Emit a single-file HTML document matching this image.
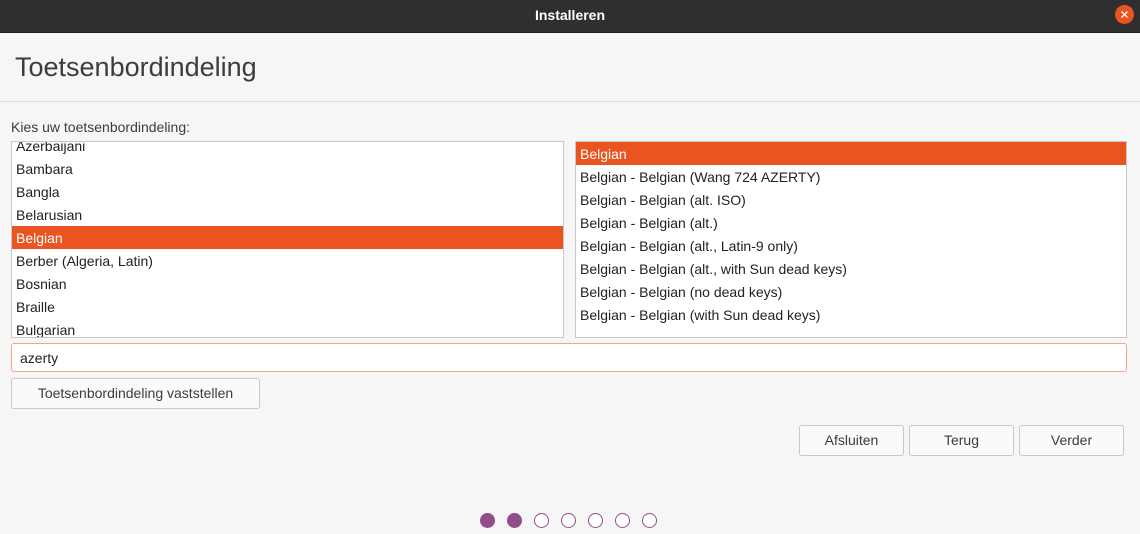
<!DOCTYPE html>
<html><head><style>
*{margin:0;padding:0;box-sizing:border-box}
body{width:1140px;height:534px;background:#f6f6f6;font-family:"Liberation Sans",sans-serif;color:#3c3c3c;position:relative;overflow:hidden}
.tb{position:absolute;left:0;top:0;width:1140px;height:33px;background:#302e2e;border-bottom:1px solid #1e1e1e}
.tb span{position:absolute;left:0;width:1140px;text-align:center;top:7px;color:#fff;font-weight:bold;font-size:14px}
.close{position:absolute;left:1115px;top:5px;width:19px;height:19px;border-radius:50%;background:#e95420}
h1{position:absolute;left:15px;top:52px;font-size:27px;font-weight:normal;color:#3c3c3c}
.sep{position:absolute;left:0;top:101px;width:1140px;height:1px;background:#dcdcdc}
.lbl{position:absolute;left:11px;top:119px;font-size:14px}
.list{position:absolute;top:141px;height:197px;background:#fff;border:1px solid #c8c8c8;overflow:hidden;font-size:14px;color:#222}
.list div{height:23px;line-height:25px;padding-left:4px;white-space:nowrap}
.list .sel{background:#e95420;color:#fff}
.entry{position:absolute;left:11px;top:343px;width:1116px;height:29px;background:#fff;border:1px solid #f2a58a;border-radius:3px;font-size:14px;color:#222;padding-left:8px;line-height:28px}
.btn{position:absolute;height:31px;border:1px solid #cdc7c2;border-radius:3px;background:#fafafa;font-size:14px;text-align:center;line-height:29px;color:#3c3c3c}
.dot{position:absolute;top:513px;width:15px;height:15px;border-radius:50%;border:1.5px solid #924d8b;background:#fff}
.dot.f{background:#924d8b}
</style></head><body>
<div class="tb"><span>Installeren</span><div class="close"><svg width="19" height="19"><path d="M6.5 6.5L12.5 12.5M12.5 6.5L6.5 12.5" stroke="#fff" stroke-width="1.3"/></svg></div></div>
<h1>Toetsenbordindeling</h1>
<div class="sep"></div>
<div class="lbl">Kies uw toetsenbordindeling:</div>
<div class="list" style="left:11px;width:553px"><div style="margin-top:-8px">Azerbaijani</div><div>Bambara</div><div>Bangla</div><div>Belarusian</div><div class="sel">Belgian</div><div>Berber (Algeria, Latin)</div><div>Bosnian</div><div>Braille</div><div>Bulgarian</div></div>
<div class="list" style="left:575px;width:552px"><div class="sel">Belgian</div><div>Belgian - Belgian (Wang 724 AZERTY)</div><div>Belgian - Belgian (alt. ISO)</div><div>Belgian - Belgian (alt.)</div><div>Belgian - Belgian (alt., Latin-9 only)</div><div>Belgian - Belgian (alt., with Sun dead keys)</div><div>Belgian - Belgian (no dead keys)</div><div>Belgian - Belgian (with Sun dead keys)</div></div>
<div class="entry">azerty</div>
<div class="btn" style="left:11px;top:378px;width:249px">Toetsenbordindeling vaststellen</div>
<div class="btn" style="left:799px;top:425px;width:105px">Afsluiten</div>
<div class="btn" style="left:909px;top:425px;width:105px">Terug</div>
<div class="btn" style="left:1019px;top:425px;width:105px">Verder</div>
<div class="dot f" style="left:480px"></div><div class="dot f" style="left:507px"></div><div class="dot" style="left:534px"></div><div class="dot" style="left:561px"></div><div class="dot" style="left:588px"></div><div class="dot" style="left:615px"></div><div class="dot" style="left:642px"></div>
</body></html>
